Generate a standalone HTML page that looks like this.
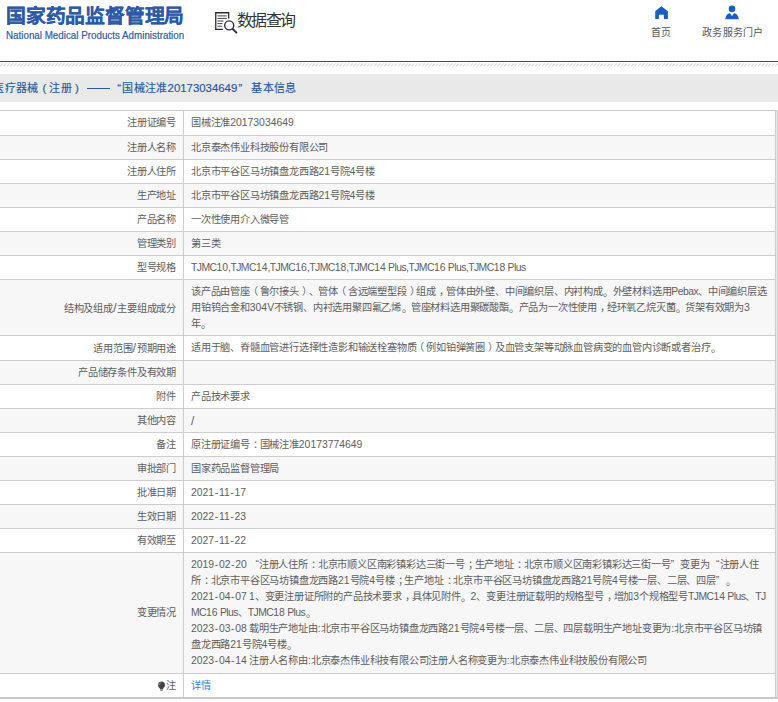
<!DOCTYPE html>
<html lang="zh-CN">
<head>
<meta charset="utf-8">
<style>
html,body{margin:0;padding:0;background:#fff;}
body{text-spacing-trim:space-all;width:778px;height:702px;overflow:hidden;position:relative;font-family:"Liberation Sans",sans-serif;color:#555;}
.abs{position:absolute;white-space:nowrap;}
#logo{left:6px;top:1.5px;font-size:20px;font-weight:900;color:#2c5aa8;line-height:28px;transform:scale(0.99,0.94);transform-origin:7px 23px;-webkit-text-stroke:0.2px #2c5aa8;}
#logoen{left:5.6px;top:28.5px;font-size:10.8px;color:#2f5a9e;line-height:12px;transform:scaleX(0.908);transform-origin:0 0;-webkit-text-stroke:0.2px #2f5a9e;}
#sjcx{left:236.8px;top:9px;font-size:16px;letter-spacing:-1.5px;color:#333;line-height:24px;}
#navhome{left:651px;top:24.5px;font-size:10px;color:#555;line-height:16px;}
#navuser{left:702px;top:24.5px;font-size:10px;letter-spacing:0.3px;color:#555;line-height:16px;}
#blueline{left:0;top:61px;width:778px;height:1px;background:#2a5582;}
#hatch{left:0;top:63px;width:778px;height:3px;background:repeating-linear-gradient(135deg,#fff 0,#fff 1.3px,#d8d8d8 1.3px,#d8d8d8 2.4px);}
#bar{left:0;top:74px;width:778px;height:28px;background:#e9e9e9;}
.bt{top:80px;font-size:11px;letter-spacing:0.2px;color:#2557a2;line-height:16px;-webkit-text-stroke:0.15px #2557a2;}
.row{position:absolute;left:0;width:776px;border-top:1px solid #d0cccd;box-sizing:border-box;}
.row.g{background:#f7f7f7;}
.lab{position:absolute;right:600px;text-align:right;font-size:10.2px;line-height:16px;color:#5e5e5e;white-space:nowrap;letter-spacing:-0.2px;}
.val{position:absolute;left:191px;font-size:10.2px;line-height:16px;color:#5e5e5e;white-space:nowrap;letter-spacing:-0.2px;}
.l{letter-spacing:-0.55px;font-size:10.4px;}
.h{margin:0 0.65px;letter-spacing:0;font-size:10.4px;}
.d{font-size:10.4px;letter-spacing:0;}
.q1{display:inline-block;width:9.8px;text-align:right;letter-spacing:0;font-size:10.4px;}
.q2{display:inline-block;width:9.8px;text-align:left;letter-spacing:0;font-size:10.4px;}
.pl{position:relative;left:-2px;}
.pr{position:relative;left:3px;}
.cl{position:relative;left:3.5px;}
.cm{position:relative;left:3px;}
.pd{position:relative;left:0.6px;top:1.2px;}
.sl{font-size:12px;margin:0 0.6px 0 0.4px;letter-spacing:0;}
#vline{left:183px;top:110px;width:1px;height:588px;background:#d0cccd;}
#rline{left:775px;top:110px;width:1px;height:588px;background:#d0cccd;}
#bline{left:0;top:697px;width:778px;height:2px;background:#cdc9ca;}
</style>
</head>
<body>

<div class="abs" id="logo">国家药品监督管理局</div>
<div class="abs" id="logoen">National Medical Products Administration</div>
<svg class="abs" style="left:213px;top:10px" width="26" height="26" viewBox="0 0 26 26">
  <path d="M9.8 19.35 H2.75 V2.75 H15.65 V8.4" fill="none" stroke="#2b2b33" stroke-width="1.3"/>
  <path d="M4.8 5.9h8.6M4.8 8.4h8.6M4.8 11h5.3M4.8 13.6h4.2M4.8 16.2h3.8" stroke="#2b2b33" stroke-width="0.9" stroke-linecap="round"/>
  <circle cx="16.2" cy="15.4" r="4.5" fill="none" stroke="#2b2b33" stroke-width="1.4"/>
  <path d="M19.6 18.9 L23.4 22.6" stroke="#2b2b33" stroke-width="1.9" stroke-linecap="round"/>
</svg>
<div class="abs" id="sjcx">数据查询</div>
<svg class="abs" style="left:654px;top:5px" width="15" height="15" viewBox="0 0 15 15">
  <path d="M7.4 1.2 L13.9 6.2 V13.9 H9.9 V9.7 H4.9 V13.9 H1.2 V6.2 Z" fill="#1a5fbf"/>
</svg>
<svg class="abs" style="left:724px;top:4px" width="16" height="16" viewBox="0 0 16 16">
  <circle cx="8" cy="4.9" r="3.3" fill="#1a5fbf"/>
  <path d="M1.2 15.3 C1.8 11.5 3.6 9.6 5.8 9.1 L8 12 L10.2 9.1 C12.4 9.6 14.2 11.5 14.9 15.3 Z" fill="#1a5fbf"/>
</svg>
<div class="abs" id="navhome">首页</div>
<div class="abs" id="navuser">政务服务门户</div>
<div class="abs" id="blueline"></div>
<svg class="abs" style="left:0;top:62.5px" width="778" height="4" viewBox="0 0 778 4"><defs><pattern id="hp" width="3.43" height="4" patternUnits="userSpaceOnUse"><path d="M-0.5 3.6 L3 0.4" stroke="#d4d4d4" stroke-width="0.9"/></pattern></defs><rect width="778" height="4" fill="url(#hp)"/></svg>
<div class="abs" id="bar"></div>
<div class="abs bt" style="left:-6.6px">医疗器械</div>
<div class="abs bt" style="left:42.6px;font-size:11.4px">(</div>
<div class="abs bt" style="left:49.4px">注册</div>
<div class="abs bt" style="left:75px;font-size:11.4px">)</div>
<div class="abs" style="left:87.4px;top:88px;width:23px;height:1.2px;background:#2a5aa0"></div>
<div class="abs bt" style="left:117.2px;font-size:11.4px">“</div>
<div class="abs bt" style="left:122.4px">国械注准</div>
<div class="abs bt" style="left:167.6px;font-size:11.4px;letter-spacing:0">20173034649</div>
<div class="abs bt" style="left:238.4px;font-size:11.4px">”</div>
<div class="abs bt" style="left:251.4px">基本信息</div>

<div class="row" style="top:110px;height:25px"><div class="lab" style="top:4.0px">注册证编号</div><div class="val" style="top:4px">国械注准<span class="d">20173034649</span></div></div>
<div class="row g" style="top:135px;height:24px"><div class="lab" style="top:4.0px">注册人名称</div><div class="val" style="top:4px">北京泰杰伟业科技股份有限公司</div></div>
<div class="row" style="top:159px;height:24px"><div class="lab" style="top:4.0px">注册人住所</div><div class="val" style="top:4px">北京市平谷区马坊镇盘龙西路<span class="d">21</span>号院<span class="d">4</span>号楼</div></div>
<div class="row g" style="top:183px;height:24px"><div class="lab" style="top:4.0px">生产地址</div><div class="val" style="top:4px">北京市平谷区马坊镇盘龙西路<span class="d">21</span>号院<span class="d">4</span>号楼</div></div>
<div class="row" style="top:207px;height:24px"><div class="lab" style="top:4.0px">产品名称</div><div class="val" style="top:4px">一次性使用介入微导管</div></div>
<div class="row g" style="top:231px;height:24px"><div class="lab" style="top:4.0px">管理类别</div><div class="val" style="top:4px">第三类</div></div>
<div class="row" style="top:255px;height:24px"><div class="lab" style="top:4.0px">型号规格</div><div class="val" style="top:4px"><span class="l">TJMC</span><span class="d">10</span><span class="l">,TJMC</span><span class="d">14</span><span class="l">,TJMC</span><span class="d">16</span><span class="l">,TJMC</span><span class="d">18</span><span class="l">,TJMC</span><span class="d">14</span><span class="l"> Plus,TJMC</span><span class="d">16</span><span class="l"> Plus,TJMC</span><span class="d">18</span><span class="l"> Plus</span></div></div>
<div class="row g" style="top:279px;height:56px"><div class="lab" style="top:20.0px">结构及组成<span class="sl">/</span>主要组成成分</div><div class="val" style="top:4px">该产品由管座<span class="pl">（</span>鲁尔接头<span class="pr">）</span>、管体<span class="pl">（</span>含远端塑型段<span class="pr">）</span>组成<span class="cm">，</span>管体由外壁、中间编织层、内衬构成<span class="pd">。</span>外壁材料选用<span class="l">Pebax</span>、中间编织层选<br>用铂钨合金和<span class="d">304</span><span class="l">V</span>不锈钢、内衬选用聚四氟乙烯<span class="pd">。</span>管座材料选用聚碳酸酯<span class="pd">。</span>产品为一次性使用<span class="cm">，</span>经环氧乙烷灭菌<span class="pd">。</span>货架有效期为<span class="d">3</span><br>年<span class="pd">。</span></div></div>
<div class="row" style="top:335px;height:25px"><div class="lab" style="top:4.0px">适用范围<span class="sl">/</span>预期用途</div><div class="val" style="top:4px">适用于脑、脊髓血管进行选择性造影和输送栓塞物质<span class="pl">（</span>例如铂弹簧圈<span class="pr">）</span>及血管支架等动脉血管病变的血管内诊断或者治疗<span class="pd">。</span></div></div>
<div class="row g" style="top:360px;height:24px"><div class="lab" style="top:4.0px">产品储存条件及有效期</div><div class="val" style="top:4px"></div></div>
<div class="row" style="top:384px;height:24px"><div class="lab" style="top:4.0px">附件</div><div class="val" style="top:4px">产品技术要求</div></div>
<div class="row g" style="top:408px;height:24px"><div class="lab" style="top:4.0px">其他内容</div><div class="val" style="top:4px"><span class="sl" style="margin:0">/</span></div></div>
<div class="row" style="top:432px;height:24px"><div class="lab" style="top:4.0px">备注</div><div class="val" style="top:4px">原注册证编号<span class="cl">：</span>国械注准<span class="d">20173774649</span></div></div>
<div class="row g" style="top:456px;height:24px"><div class="lab" style="top:4.0px">审批部门</div><div class="val" style="top:4px">国家药品监督管理局</div></div>
<div class="row" style="top:480px;height:24px"><div class="lab" style="top:4.0px">批准日期</div><div class="val" style="top:4px"><span class="d">2021</span><span class="h">-</span><span class="d">11</span><span class="h">-</span><span class="d">17</span></div></div>
<div class="row g" style="top:504px;height:24px"><div class="lab" style="top:4.0px">生效日期</div><div class="val" style="top:4px"><span class="d">2022</span><span class="h">-</span><span class="d">11</span><span class="h">-</span><span class="d">23</span></div></div>
<div class="row" style="top:528px;height:24px"><div class="lab" style="top:4.0px">有效期至</div><div class="val" style="top:4px"><span class="d">2027</span><span class="h">-</span><span class="d">11</span><span class="h">-</span><span class="d">22</span></div></div>
<div class="row g" style="top:552px;height:121px"><div class="lab" style="top:52.0px">变更情况</div><div class="val" style="top:4px"><span class="d">2019</span><span class="h">-</span><span class="d">02</span><span class="h">-</span><span class="d">20</span><span class="l"> </span><span class="q1">“</span>注册人住所<span class="cl">：</span>北京市顺义区南彩镇彩达三街一号<span class="cl">；</span>生产地址<span class="cl">：</span>北京市顺义区南彩镇彩达三街一号<span class="q2">”</span>变更为<span class="q1">“</span>注册人住<br>所<span class="cl">：</span>北京市平谷区马坊镇盘龙西路<span class="d">21</span>号院<span class="d">4</span>号楼<span class="cl">；</span>生产地址<span class="cl">：</span>北京市平谷区马坊镇盘龙西路<span class="d">21</span>号院<span class="d">4</span>号楼一层、二层、四层<span class="q2">”</span><span class="pd">。</span><br><span class="d">2021</span><span class="h">-</span><span class="d">04</span><span class="h">-</span><span class="d">07</span><span class="l"> </span><span class="d">1</span>、变更注册证所附的产品技术要求<span class="cm">，</span>具体见附件<span class="pd">。</span><span class="d">2</span>、变更注册证载明的规格型号<span class="cm">，</span>增加<span class="d">3</span>个规格型号<span class="l">TJMC</span><span class="d">14</span><span class="l"> Plus</span>、<span class="l">TJ</span><br><span class="l">MC</span><span class="d">16</span><span class="l"> Plus</span>、<span class="l">TJMC</span><span class="d">18</span><span class="l"> Plus</span><span class="pd">。</span><br><span class="d">2023</span><span class="h">-</span><span class="d">03</span><span class="h">-</span><span class="d">08</span><span class="l"> </span>载明生产地址由<span class="d">:</span>北京市平谷区马坊镇盘龙西路<span class="d">21</span>号院<span class="d">4</span>号楼一层、二层、四层载明生产地址变更为<span class="d">:</span>北京市平谷区马坊镇<br>盘龙西路<span class="d">21</span>号院<span class="d">4</span>号楼<span class="pd">。</span><br><span class="d">2023</span><span class="h">-</span><span class="d">04</span><span class="h">-</span><span class="d">14</span><span class="l"> </span>注册人名称由<span class="d">:</span>北京泰杰伟业科技有限公司注册人名称变更为<span class="d">:</span>北京泰杰伟业科技股份有限公司</div></div>
<div class="row" style="top:673px;height:25px"><div class="lab" style="top:4.0px"><svg style="display:inline-block;vertical-align:-2.5px;margin-right:0.2px" width="9" height="11" viewBox="0 0 9 11"><path d="M4.5 0.5 C2.5 0.5 1 2 1 4 C1 5.4 1.8 6.3 2.6 7.2 L3.2 8.6 H5.8 L6.4 7.2 C7.2 6.3 8 5.4 8 4 C8 2 6.5 0.5 4.5 0.5 Z" fill="#454545"/><path d="M2.3 4.2 C2.3 3 3 2.1 4 1.9" fill="none" stroke="#bbb" stroke-width="0.7"/><path d="M3.4 8.9 H5.6 V10 H3.4 Z" fill="#777"/></svg>注</div><div class="val" style="top:4px"><span style="color:#2f86e0">详情</span></div></div>
<div class="abs" id="vline"></div>
<div class="abs" id="rline"></div>
<div class="abs" style="left:776px;top:110px;width:1px;height:587px;background:#e6e6e6"></div>
<div class="abs" style="left:777px;top:110px;width:1px;height:587px;background:#d0d0d0"></div>
<div class="abs" id="bline"></div>
</body>
</html>
